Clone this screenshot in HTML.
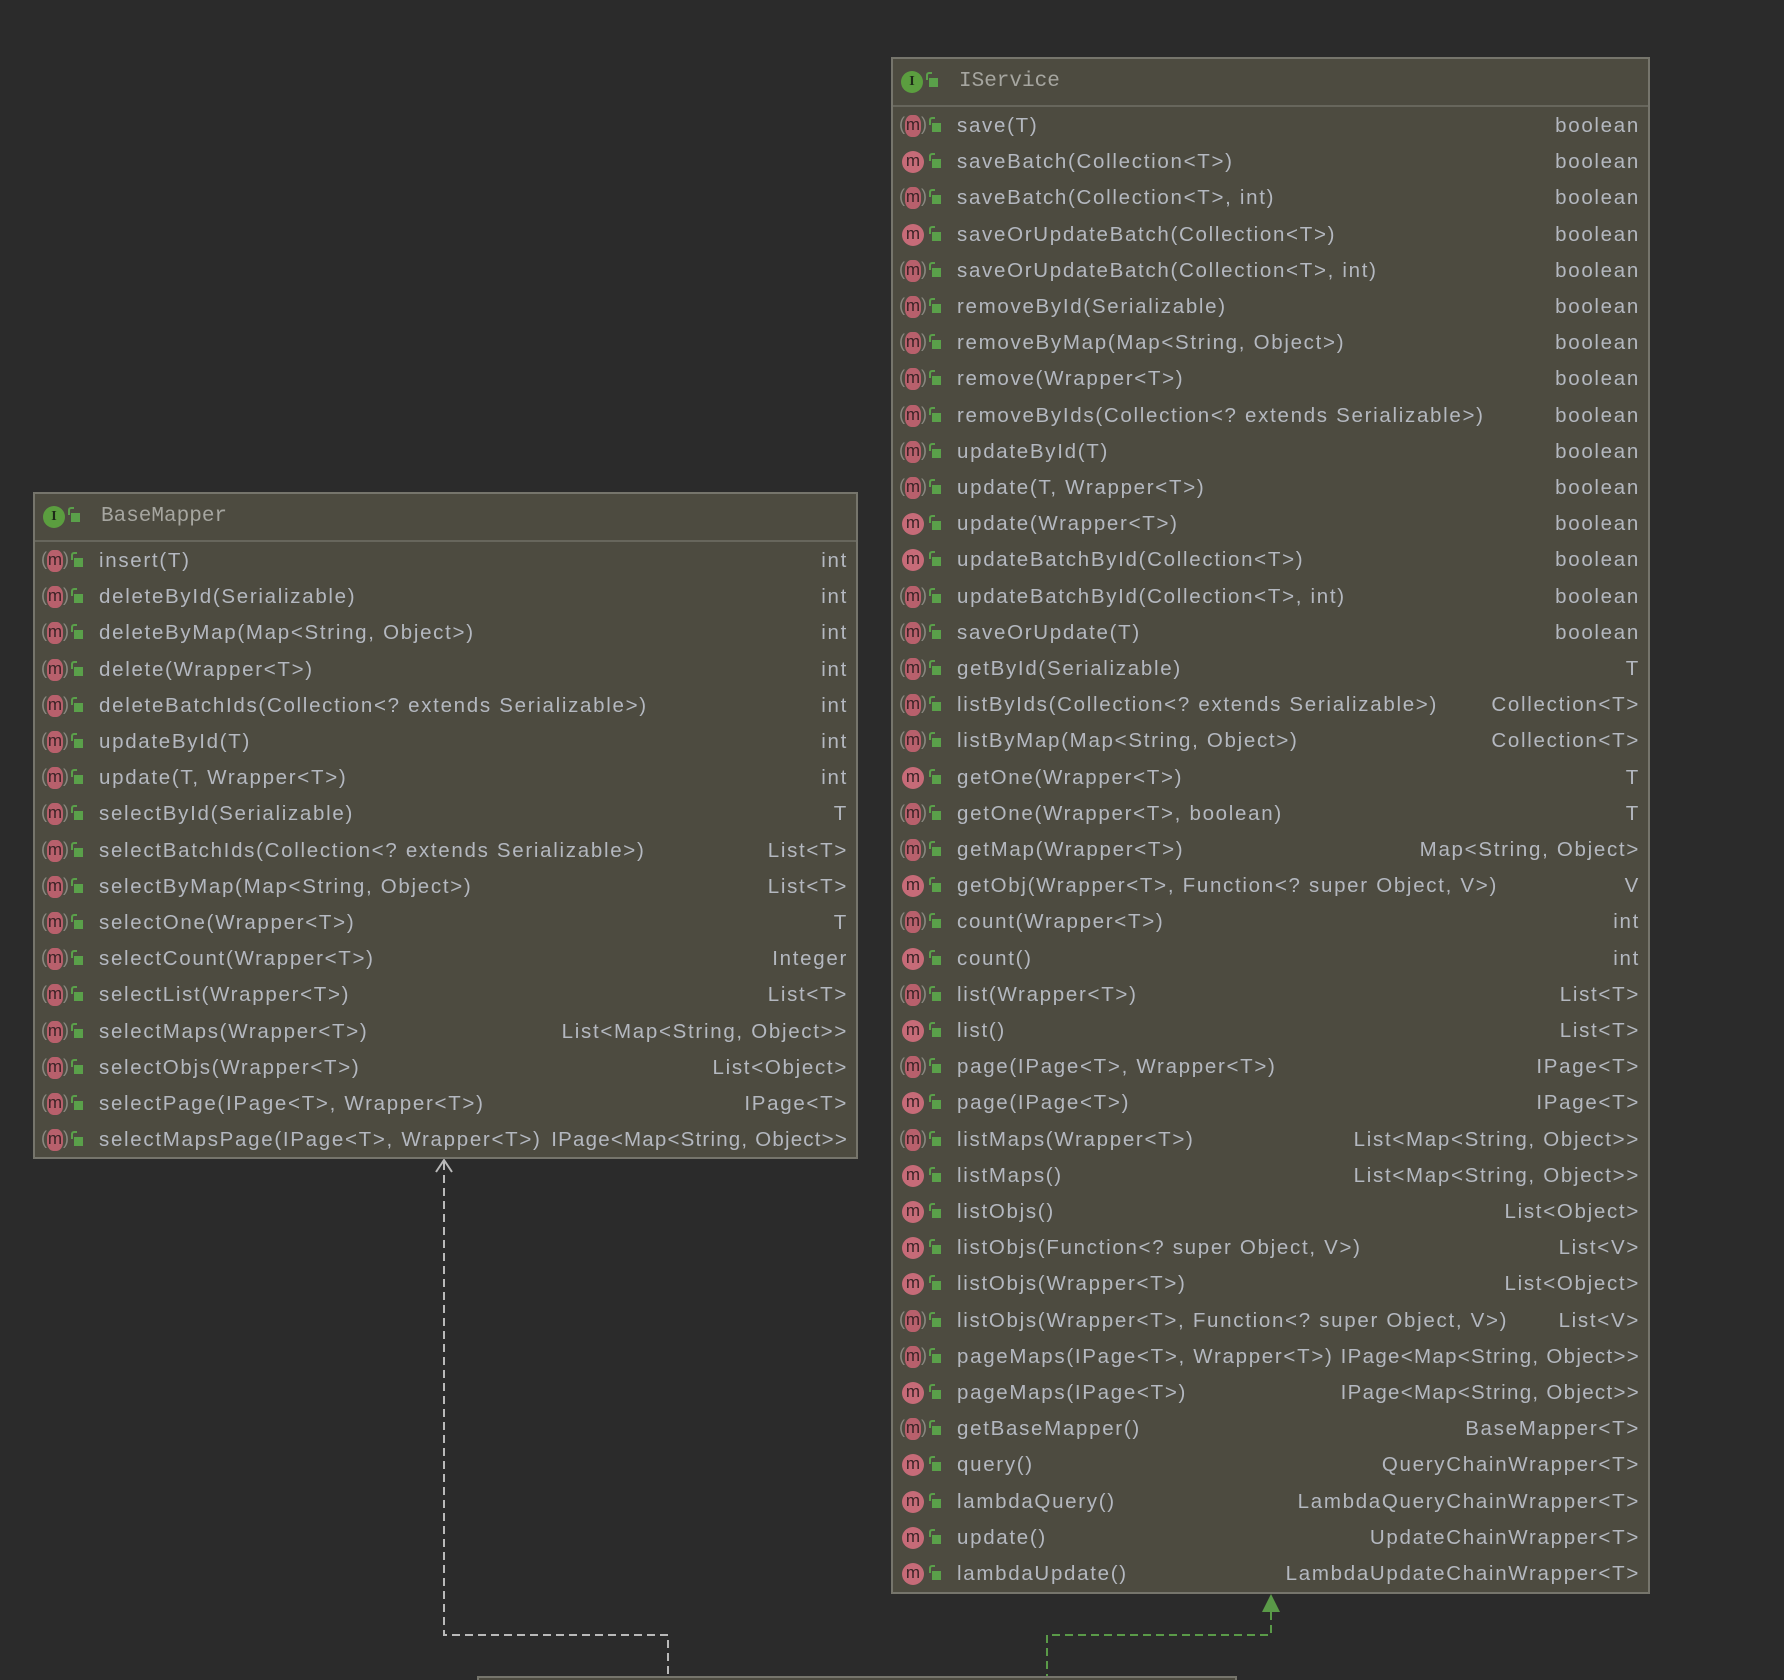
<!DOCTYPE html>
<html><head><meta charset="utf-8"><style>
body{margin:0;width:1784px;height:1680px;background:#2b2b2b;position:relative;overflow:hidden;font-family:"Liberation Sans",sans-serif}
.box{position:absolute;background:#4d4b40;border:2px solid #76756c;box-sizing:border-box}
.hd{position:absolute;left:0;right:0;top:0;border-bottom:2px solid #67665c}
.hd .t{position:absolute;left:66px;font-family:"Liberation Mono",monospace;font-size:21px;color:#a6a6a0}
.ic{position:absolute;left:8px;width:22px;height:22px;border-radius:50%;background:#5b9e3f;color:#1e2a18;font:bold 14px "Liberation Serif",serif;text-align:center;line-height:22px}
.r{position:absolute;left:0;right:0;height:36px;font-size:20.5px;letter-spacing:1.7px;color:#b4b8c0;line-height:36px}
.r .n{position:absolute;left:64px}
.r .v{position:absolute;right:8px}
.m{position:absolute;left:9px;top:7px;width:22px;height:22px;border-radius:50%;background:#c66b78;color:#3a2225;font-size:17px;line-height:19px;text-align:center;letter-spacing:0}
.a .m{border-radius:40%;width:16px;left:12px;background:#b8606c}
.a .m:before{content:"(";position:absolute;left:-6px;top:0;color:#8a8880;font-size:18px}
.a .m:after{content:")";position:absolute;right:-6px;top:0;color:#8a8880;font-size:18px}
.l{position:absolute;left:39px;top:15px;width:9px;height:9px;background:#5aa04a}
.l:before{content:"";position:absolute;left:-3px;top:-6px;width:4px;height:6px;border:2px solid #5aa04a;border-bottom:none;border-right:none;border-radius:3px 0 0 0}
</style></head><body>

<svg width="1784" height="1680" style="position:absolute;left:0;top:0">
<polyline points="444,1162 444,1635 668,1635 668,1680" fill="none" stroke="#b9b9b9" stroke-width="2" stroke-dasharray="8,5"/>
<polyline points="436,1172 444,1160 452,1172" fill="none" stroke="#b9b9b9" stroke-width="2"/>
<polyline points="1271,1612 1271,1635 1047,1635 1047,1680" fill="none" stroke="#5a9a48" stroke-width="2" stroke-dasharray="8,5"/>
<polygon points="1271,1594 1262,1612 1280,1612" fill="#5a9a48"/>
<rect x="478" y="1677" width="758" height="10" fill="#4d4b40" stroke="#76756c" stroke-width="2"/>
</svg>

<div class="box" style="left:33px;top:492px;width:825px;height:667px">
<div class="hd" style="height:46px"><div class="ic" style="top:12px">I</div><div class="l" style="left:36px;top:19px"></div><div class="t" style="top:11px">BaseMapper</div></div>
<div style="position:absolute;left:0;right:0;top:49px">
<div class="r a" style="top:0"><div class="m">m</div><div class="l"></div><span class="n">insert(T)</span><span class="v">int</span></div>
<div class="r a" style="top:36.2px"><div class="m">m</div><div class="l"></div><span class="n">deleteById(Serializable)</span><span class="v">int</span></div>
<div class="r a" style="top:72.4px"><div class="m">m</div><div class="l"></div><span class="n">deleteByMap(Map&lt;String, Object&gt;)</span><span class="v">int</span></div>
<div class="r a" style="top:108.6px"><div class="m">m</div><div class="l"></div><span class="n">delete(Wrapper&lt;T&gt;)</span><span class="v">int</span></div>
<div class="r a" style="top:144.8px"><div class="m">m</div><div class="l"></div><span class="n">deleteBatchIds(Collection&lt;? extends Serializable&gt;)</span><span class="v">int</span></div>
<div class="r a" style="top:181px"><div class="m">m</div><div class="l"></div><span class="n">updateById(T)</span><span class="v">int</span></div>
<div class="r a" style="top:217.2px"><div class="m">m</div><div class="l"></div><span class="n">update(T, Wrapper&lt;T&gt;)</span><span class="v">int</span></div>
<div class="r a" style="top:253.4px"><div class="m">m</div><div class="l"></div><span class="n">selectById(Serializable)</span><span class="v">T</span></div>
<div class="r a" style="top:289.6px"><div class="m">m</div><div class="l"></div><span class="n">selectBatchIds(Collection&lt;? extends Serializable&gt;)</span><span class="v">List&lt;T&gt;</span></div>
<div class="r a" style="top:325.8px"><div class="m">m</div><div class="l"></div><span class="n">selectByMap(Map&lt;String, Object&gt;)</span><span class="v">List&lt;T&gt;</span></div>
<div class="r a" style="top:362px"><div class="m">m</div><div class="l"></div><span class="n">selectOne(Wrapper&lt;T&gt;)</span><span class="v">T</span></div>
<div class="r a" style="top:398.2px"><div class="m">m</div><div class="l"></div><span class="n">selectCount(Wrapper&lt;T&gt;)</span><span class="v">Integer</span></div>
<div class="r a" style="top:434.4px"><div class="m">m</div><div class="l"></div><span class="n">selectList(Wrapper&lt;T&gt;)</span><span class="v">List&lt;T&gt;</span></div>
<div class="r a" style="top:470.6px"><div class="m">m</div><div class="l"></div><span class="n">selectMaps(Wrapper&lt;T&gt;)</span><span class="v">List&lt;Map&lt;String, Object&gt;&gt;</span></div>
<div class="r a" style="top:506.8px"><div class="m">m</div><div class="l"></div><span class="n">selectObjs(Wrapper&lt;T&gt;)</span><span class="v">List&lt;Object&gt;</span></div>
<div class="r a" style="top:543px"><div class="m">m</div><div class="l"></div><span class="n">selectPage(IPage&lt;T&gt;, Wrapper&lt;T&gt;)</span><span class="v">IPage&lt;T&gt;</span></div>
<div class="r a" style="top:579.2px"><div class="m">m</div><div class="l"></div><span class="n">selectMapsPage(IPage&lt;T&gt;, Wrapper&lt;T&gt;)</span><span class="v" style="letter-spacing:1.2px">IPage&lt;Map&lt;String, Object&gt;&gt;</span></div>
</div></div>

<div class="box" style="left:891px;top:57px;width:759px;height:1537px">
<div class="hd" style="height:46px"><div class="ic" style="top:12px">I</div><div class="l" style="left:36px;top:19px"></div><div class="t" style="top:11px">IService</div></div>
<div style="position:absolute;left:0;right:0;top:49px">
<div class="r a" style="top:0"><div class="m">m</div><div class="l"></div><span class="n">save(T)</span><span class="v">boolean</span></div>
<div class="r" style="top:36.2px"><div class="m">m</div><div class="l"></div><span class="n">saveBatch(Collection&lt;T&gt;)</span><span class="v">boolean</span></div>
<div class="r a" style="top:72.4px"><div class="m">m</div><div class="l"></div><span class="n">saveBatch(Collection&lt;T&gt;, int)</span><span class="v">boolean</span></div>
<div class="r" style="top:108.6px"><div class="m">m</div><div class="l"></div><span class="n">saveOrUpdateBatch(Collection&lt;T&gt;)</span><span class="v">boolean</span></div>
<div class="r a" style="top:144.8px"><div class="m">m</div><div class="l"></div><span class="n">saveOrUpdateBatch(Collection&lt;T&gt;, int)</span><span class="v">boolean</span></div>
<div class="r a" style="top:181px"><div class="m">m</div><div class="l"></div><span class="n">removeById(Serializable)</span><span class="v">boolean</span></div>
<div class="r a" style="top:217.2px"><div class="m">m</div><div class="l"></div><span class="n">removeByMap(Map&lt;String, Object&gt;)</span><span class="v">boolean</span></div>
<div class="r a" style="top:253.4px"><div class="m">m</div><div class="l"></div><span class="n">remove(Wrapper&lt;T&gt;)</span><span class="v">boolean</span></div>
<div class="r a" style="top:289.6px"><div class="m">m</div><div class="l"></div><span class="n">removeByIds(Collection&lt;? extends Serializable&gt;)</span><span class="v">boolean</span></div>
<div class="r a" style="top:325.8px"><div class="m">m</div><div class="l"></div><span class="n">updateById(T)</span><span class="v">boolean</span></div>
<div class="r a" style="top:362px"><div class="m">m</div><div class="l"></div><span class="n">update(T, Wrapper&lt;T&gt;)</span><span class="v">boolean</span></div>
<div class="r" style="top:398.2px"><div class="m">m</div><div class="l"></div><span class="n">update(Wrapper&lt;T&gt;)</span><span class="v">boolean</span></div>
<div class="r" style="top:434.4px"><div class="m">m</div><div class="l"></div><span class="n">updateBatchById(Collection&lt;T&gt;)</span><span class="v">boolean</span></div>
<div class="r a" style="top:470.6px"><div class="m">m</div><div class="l"></div><span class="n">updateBatchById(Collection&lt;T&gt;, int)</span><span class="v">boolean</span></div>
<div class="r a" style="top:506.8px"><div class="m">m</div><div class="l"></div><span class="n">saveOrUpdate(T)</span><span class="v">boolean</span></div>
<div class="r a" style="top:543px"><div class="m">m</div><div class="l"></div><span class="n">getById(Serializable)</span><span class="v">T</span></div>
<div class="r a" style="top:579.2px"><div class="m">m</div><div class="l"></div><span class="n">listByIds(Collection&lt;? extends Serializable&gt;)</span><span class="v">Collection&lt;T&gt;</span></div>
<div class="r a" style="top:615.4px"><div class="m">m</div><div class="l"></div><span class="n">listByMap(Map&lt;String, Object&gt;)</span><span class="v">Collection&lt;T&gt;</span></div>
<div class="r" style="top:651.6px"><div class="m">m</div><div class="l"></div><span class="n">getOne(Wrapper&lt;T&gt;)</span><span class="v">T</span></div>
<div class="r a" style="top:687.8px"><div class="m">m</div><div class="l"></div><span class="n">getOne(Wrapper&lt;T&gt;, boolean)</span><span class="v">T</span></div>
<div class="r a" style="top:724px"><div class="m">m</div><div class="l"></div><span class="n">getMap(Wrapper&lt;T&gt;)</span><span class="v">Map&lt;String, Object&gt;</span></div>
<div class="r" style="top:760.2px"><div class="m">m</div><div class="l"></div><span class="n">getObj(Wrapper&lt;T&gt;, Function&lt;? super Object, V&gt;)</span><span class="v">V</span></div>
<div class="r a" style="top:796.4px"><div class="m">m</div><div class="l"></div><span class="n">count(Wrapper&lt;T&gt;)</span><span class="v">int</span></div>
<div class="r" style="top:832.6px"><div class="m">m</div><div class="l"></div><span class="n">count()</span><span class="v">int</span></div>
<div class="r a" style="top:868.8px"><div class="m">m</div><div class="l"></div><span class="n">list(Wrapper&lt;T&gt;)</span><span class="v">List&lt;T&gt;</span></div>
<div class="r" style="top:905px"><div class="m">m</div><div class="l"></div><span class="n">list()</span><span class="v">List&lt;T&gt;</span></div>
<div class="r a" style="top:941.2px"><div class="m">m</div><div class="l"></div><span class="n">page(IPage&lt;T&gt;, Wrapper&lt;T&gt;)</span><span class="v">IPage&lt;T&gt;</span></div>
<div class="r" style="top:977.4px"><div class="m">m</div><div class="l"></div><span class="n">page(IPage&lt;T&gt;)</span><span class="v">IPage&lt;T&gt;</span></div>
<div class="r a" style="top:1013.6px"><div class="m">m</div><div class="l"></div><span class="n">listMaps(Wrapper&lt;T&gt;)</span><span class="v">List&lt;Map&lt;String, Object&gt;&gt;</span></div>
<div class="r" style="top:1049.8px"><div class="m">m</div><div class="l"></div><span class="n">listMaps()</span><span class="v">List&lt;Map&lt;String, Object&gt;&gt;</span></div>
<div class="r" style="top:1086px"><div class="m">m</div><div class="l"></div><span class="n">listObjs()</span><span class="v">List&lt;Object&gt;</span></div>
<div class="r" style="top:1122.2px"><div class="m">m</div><div class="l"></div><span class="n">listObjs(Function&lt;? super Object, V&gt;)</span><span class="v">List&lt;V&gt;</span></div>
<div class="r" style="top:1158.4px"><div class="m">m</div><div class="l"></div><span class="n">listObjs(Wrapper&lt;T&gt;)</span><span class="v">List&lt;Object&gt;</span></div>
<div class="r a" style="top:1194.6px"><div class="m">m</div><div class="l"></div><span class="n">listObjs(Wrapper&lt;T&gt;, Function&lt;? super Object, V&gt;)</span><span class="v">List&lt;V&gt;</span></div>
<div class="r a" style="top:1230.8px"><div class="m">m</div><div class="l"></div><span class="n">pageMaps(IPage&lt;T&gt;, Wrapper&lt;T&gt;)</span><span class="v" style="letter-spacing:1.3px">IPage&lt;Map&lt;String, Object&gt;&gt;</span></div>
<div class="r" style="top:1267px"><div class="m">m</div><div class="l"></div><span class="n">pageMaps(IPage&lt;T&gt;)</span><span class="v" style="letter-spacing:1.3px">IPage&lt;Map&lt;String, Object&gt;&gt;</span></div>
<div class="r a" style="top:1303.2px"><div class="m">m</div><div class="l"></div><span class="n">getBaseMapper()</span><span class="v">BaseMapper&lt;T&gt;</span></div>
<div class="r" style="top:1339.4px"><div class="m">m</div><div class="l"></div><span class="n">query()</span><span class="v">QueryChainWrapper&lt;T&gt;</span></div>
<div class="r" style="top:1375.6px"><div class="m">m</div><div class="l"></div><span class="n">lambdaQuery()</span><span class="v">LambdaQueryChainWrapper&lt;T&gt;</span></div>
<div class="r" style="top:1411.8px"><div class="m">m</div><div class="l"></div><span class="n">update()</span><span class="v">UpdateChainWrapper&lt;T&gt;</span></div>
<div class="r" style="top:1448px"><div class="m">m</div><div class="l"></div><span class="n">lambdaUpdate()</span><span class="v">LambdaUpdateChainWrapper&lt;T&gt;</span></div>
</div></div>
</body></html>
